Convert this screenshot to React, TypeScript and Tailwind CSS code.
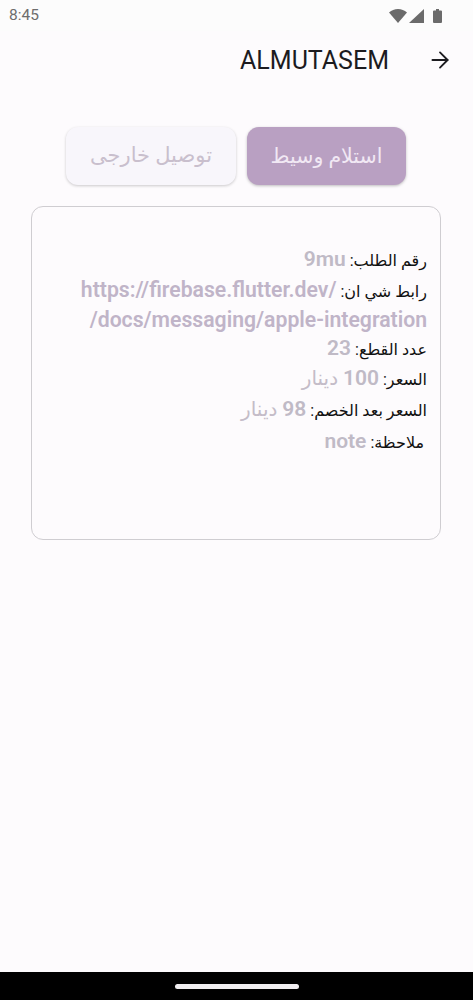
import React from "react";
import { ArrowRight } from "lucide-react";

const sans = "font-['Roboto','DejaVu_Sans',sans-serif]";

function Row({ label, value, unit, className = "" }: { label: string; value: string; unit?: string; className?: string }) {
  return (
    <div className={`text-right whitespace-nowrap ${className}`} dir="rtl">
      <span className="text-[16px] text-[#111]">{label}: </span>
      <span className="text-[21px] font-semibold text-[#c0bac6]">{value}</span>
      {unit && <span className="text-[20px] text-[#c4bcc8]"> {unit}</span>}
    </div>
  );
}

export default function App() {
  return (
    <div className={`h-[1000px] flex flex-col bg-[#fdfbfd] ${sans}`}>
      {/* Status bar */}
      <div className="h-[31px] flex items-center justify-between pl-[9px] pr-[31px] bg-[#fcfcfc]">
        <span className="text-[15.500px] text-[#6d6d6d]">8:45</span>
        <div className="flex items-center gap-[2px]">
          <svg width="18" height="14" viewBox="0 0 18 14"><path d="M0 3.500C2.500 1.300 5.600 0 9 0s6.500 1.300 9 3.500L9 14z" fill="#6b6b6b" /></svg>
          <svg width="15" height="14" viewBox="0 0 15 14"><path d="M15 0v14H0z" fill="#6b6b6b" /></svg>
          <svg width="9" height="14" viewBox="0 0 9 14" className="ml-[7px]"><path d="M3 0h3v1.500h2a1 1 0 0 1 1 1V13a1 1 0 0 1-1 1H1a1 1 0 0 1-1-1V2.500a1 1 0 0 1 1-1h2z" fill="#6b6b6b" /></svg>
        </div>
      </div>

      {/* App bar */}
      <div className="h-[58px] flex items-center justify-end pr-[20px] gap-[38px]">
        <span className="text-[25px] text-[#1c1b1f] leading-none">ALMUTASEM</span>
        <ArrowRight size={26} strokeWidth={1.7} className="text-[#1c1b1f]" />
      </div>

      {/* Tabs */}
      <div className="mt-[38px] flex justify-center gap-[11px] pr-[1px]">
        <button className="w-[170px] h-[58px] rounded-[12px] bg-[#f8f6fb] text-[#c9bfcd] text-[21px] shadow-[0_1px_3px_rgba(0,0,0,0.2)]">توصيل خارجى</button>
        <button className="w-[159px] h-[58px] rounded-[12px] bg-[#b9a0c2] text-[#f1e8f4] text-[20.500px] shadow-[0_1px_3px_rgba(0,0,0,0.25)]">استلام وسيط</button>
      </div>

      {/* Order card */}
      <div className="mt-[21px] ml-[31px] mr-[32px] h-[334px] rounded-[12px] border border-[#cfcdd1] pt-[37px] pr-[13px] flex flex-col">
        <Row label="رقم الطلب" value="9mu" className="h-[30px]" />
        <div className="text-right whitespace-nowrap h-[30px]" dir="rtl">
          <span className="text-[16px] text-[#111]">رابط شي ان: </span>
          <bdi className="text-[21.200px] font-semibold text-[#c0b4c8]">https://firebase.flutter.dev/</bdi>
        </div>
        <div className="text-right whitespace-nowrap h-[29px]" dir="rtl">
          <bdi className="text-[21.200px] font-semibold text-[#c0b4c8]">/docs/messaging/apple-integration</bdi>
        </div>
        <Row label="عدد القطع" value="23" className="h-[30px]" />
        <Row label="السعر" value="100" unit="دينار" className="h-[31px]" />
        <Row label="السعر بعد الخصم" value="98" unit="دينار" className="h-[32px]" />
        <Row label="ملاحظة" value="note" className="h-[32px] pr-[3px]" />
      </div>

      <div className="flex-1" />

      {/* Nav bar */}
      <div className="h-[28px] bg-black flex items-center justify-center">
        <div className="w-[124px] h-[5px] rounded-full bg-[#f0eef0]" />
      </div>
    </div>
  );
}
